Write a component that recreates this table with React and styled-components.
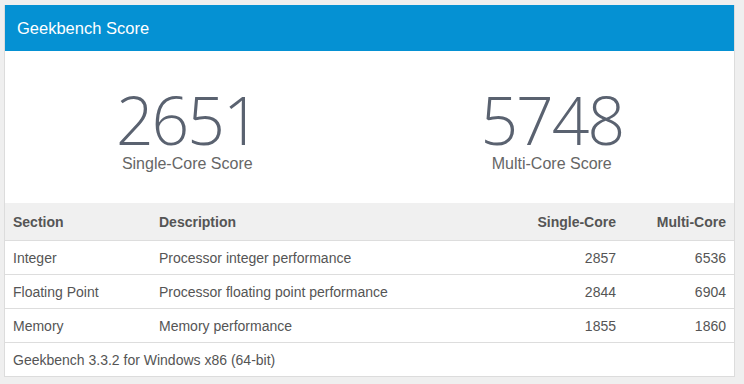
import styled, { createGlobalStyle } from "styled-components";

const Global = createGlobalStyle`
    body {
        margin: 0;
        background: #efefef;
        font-family: "Liberation Sans", Arial, sans-serif;
    }
`

const Page = styled.div`
    padding: 5px 9px 7px 4px;
`

const Card = styled.div`
    background: #fff;
    border: 1px solid #dcdcdc;
    border-top: 0;
`

const Header = styled.div`
    height: 46px;
    background: #0591d3;
    color: #fff;
    font-size: 16.5px;
    line-height: 46px;
    padding: 0 12px;
`

const Scores = styled.div`
    display: grid;
    grid-template-columns: 1fr 1fr;
    height: 152px;
    padding-top: 38px;
    box-sizing: border-box;
`

const Score = styled.div`
    display: flex;
    flex-direction: column;
    align-items: center;
    color: #5a6270;

    > .num {
        font-family: "Open Sans", sans-serif;
        font-weight: 300;
        font-size: 66px;
        line-height: 60px;
        letter-spacing: -2px;
    }

    > .label {
        font-size: 16px;
        line-height: 20px;
        color: #666;
        margin-top: 5px;
    }
`

const Table = styled.table`
    width: 100%;
    border-collapse: collapse;
    font-size: 14px;
    color: #555;

    th, td {
        padding: 0 8px;
        text-align: left;
        border-top: 1px solid #dddddd;
    }

    th {
        height: 37px;
        background: #f0f0f0;
        font-weight: bold;
        border-top: 0;
    }

    td {
        height: 33px;
    }

    .r {
        text-align: right;
    }
`

const rows = [
    { section: 'Integer', desc: 'Processor integer performance', single: 2857, multi: 6536 },
    { section: 'Floating Point', desc: 'Processor floating point performance', single: 2844, multi: 6904 },
    { section: 'Memory', desc: 'Memory performance', single: 1855, multi: 1860 },
]

const App = () => {
    return (
        <Page>
            <Global />
            <Card>
                <Header>Geekbench Score</Header>
                <Scores>
                    <Score>
                        <span className='num'>2651</span>
                        <span className='label'>Single-Core Score</span>
                    </Score>
                    <Score>
                        <span className='num'>5748</span>
                        <span className='label'>Multi-Core Score</span>
                    </Score>
                </Scores>
                <Table>
                    <thead>
                        <tr>
                            <th style={{ width: 130 }}>Section</th>
                            <th>Description</th>
                            <th className='r'>Single-Core</th>
                            <th className='r' style={{ width: 94 }}>Multi-Core</th>
                        </tr>
                    </thead>
                    <tbody>
                        {rows.map((v) => (
                            <tr key={v.section}>
                                <td>{v.section}</td>
                                <td>{v.desc}</td>
                                <td className='r'>{v.single}</td>
                                <td className='r'>{v.multi}</td>
                            </tr>
                        ))}
                        <tr>
                            <td colSpan={4}>Geekbench 3.3.2 for Windows x86 (64-bit)</td>
                        </tr>
                    </tbody>
                </Table>
            </Card>
        </Page>
    )
}

export default App;
